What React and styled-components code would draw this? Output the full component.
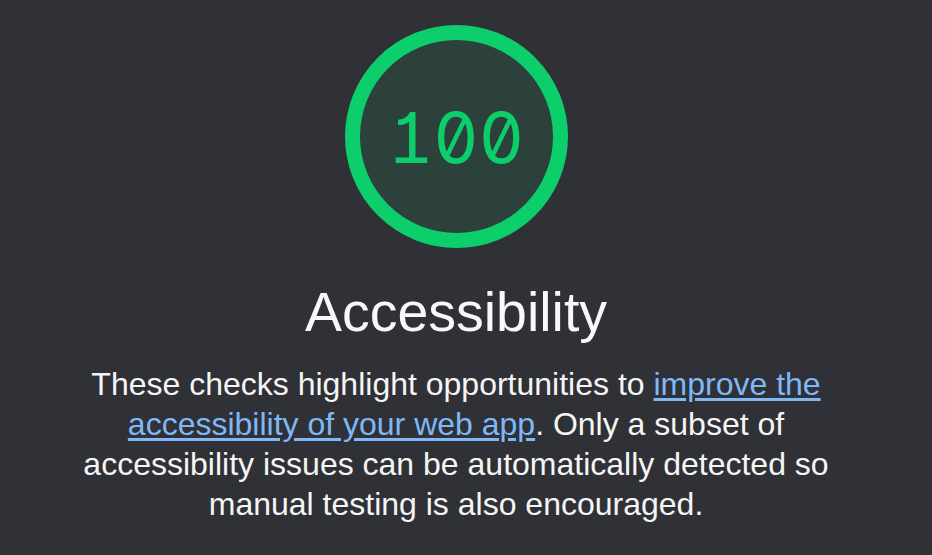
import React from 'react';
import styled, { createGlobalStyle } from 'styled-components';

const GlobalStyle = createGlobalStyle`
  html, body {
    margin: 0;
    padding: 0;
    background: #303136;
  }

  body {
    font-family: 'Liberation Sans', Arial, sans-serif;
    color: #f5f5f5;
  }
`;

const Wrapper = styled.div`
  width: 912px;
  height: 555px;
  display: flex;
  flex-direction: column;
  align-items: center;
  padding-top: 25px;
  box-sizing: border-box;
  overflow: hidden;
`;

const Gauge = styled.div`
  width: 223px;
  height: 223px;
  box-sizing: border-box;
  border: 15px solid ${(p) => p.$color};
  border-radius: 50%;
  background: rgba(12, 206, 107, 0.1);
  display: flex;
  align-items: center;
  justify-content: center;
`;

const Score = styled.span`
  font-family: Inter, 'DejaVu Sans Mono', monospace;
  font-feature-settings: 'zero' 1, 'tnum' 1, 'cv01' 1;
  font-size: 70px;
  line-height: 1;
  color: ${(p) => p.$color};
  margin-top: 3px;
`;

const Title = styled.h1`
  margin: 32px 0 0;
  font-size: 55.5px;
  line-height: 64px;
  font-weight: normal;
  color: #f8f8f8;
`;

const Description = styled.p`
  margin: 20px 0 0;
  max-width: 780px;
  font-size: 32px;
  line-height: 40px;
  text-align: center;
  color: #f5f5f5;

  a {
    color: #7fb8f6;
    text-decoration: underline;
    text-underline-offset: 3px;
  }
`;

export default function App() {
  const green = '#0cce6b';

  return (
    <>
      <GlobalStyle />
      <Wrapper>
        <Gauge $color={green}>
          <Score $color={green}>100</Score>
        </Gauge>
        <Title>Accessibility</Title>
        <Description>
          These checks highlight opportunities to{' '}
          <a href="#a11y">improve the accessibility of your web app</a>. Only a subset of
          accessibility issues can be automatically detected so manual testing is also
          encouraged.
        </Description>
      </Wrapper>
    </>
  );
}
